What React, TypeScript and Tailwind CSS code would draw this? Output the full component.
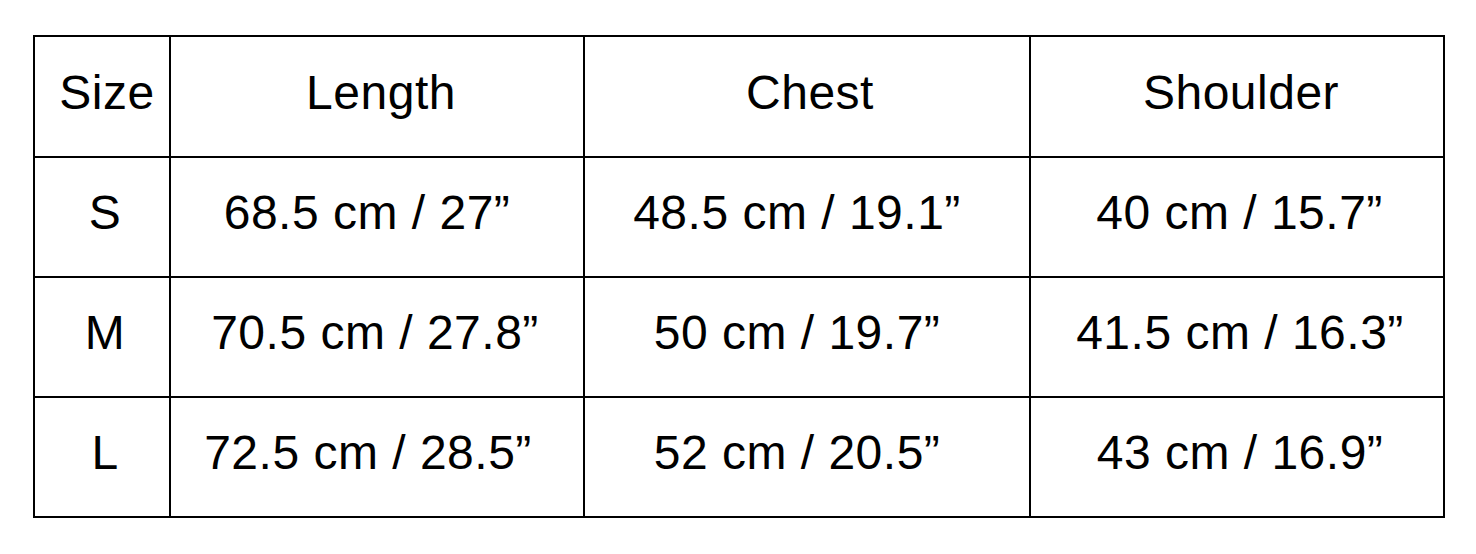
type Cell = { text: string; pad: string };

const header: Cell[] = [
  { text: "Size", pad: "pl-[10px]" },
  { text: "Length", pad: "pl-[8px]" },
  { text: "Chest", pad: "pl-[6px]" },
  { text: "Shoulder", pad: "pl-[8px]" },
];

const rows: Cell[][] = [
  [
    { text: "S", pad: "pl-[6px]" },
    { text: "68.5 cm / 27\u201d", pad: "pr-[20px]" },
    { text: "48.5 cm / 19.1\u201d", pad: "pr-[20px]" },
    { text: "40 cm / 15.7\u201d", pad: "pl-[5px]" },
  ],
  [
    { text: "M", pad: "pl-[6px]" },
    { text: "70.5 cm / 27.8\u201d", pad: "pr-[4px]" },
    { text: "50 cm / 19.7\u201d", pad: "pr-[20px]" },
    { text: "41.5 cm / 16.3\u201d", pad: "pl-[6px]" },
  ],
  [
    { text: "L", pad: "pl-[6px]" },
    { text: "72.5 cm / 28.5\u201d", pad: "pr-[18px]" },
    { text: "52 cm / 20.5\u201d", pad: "pr-[20px]" },
    { text: "43 cm / 16.9\u201d", pad: "pl-[6px]" },
  ],
];

export default function App() {
  return (
    <div className="w-[1476px] h-[554px] bg-white pt-[35px] pl-[33px] font-['Liberation_Sans',Arial,sans-serif] text-black">
      <table className="table-fixed border-collapse border-2 border-black w-[1410px] text-[48px] tracking-[0.5px] leading-none">
        <colgroup>
          <col className="w-[136px]" />
          <col className="w-[414px]" />
          <col className="w-[446px]" />
          <col className="w-[414px]" />
        </colgroup>
        <thead>
          <tr className="h-[121px]">
            {header.map((h) => (
              <th key={h.text} className={`border-2 border-black font-normal text-center p-0 pb-[8px] ${h.pad}`}>
                {h.text}
              </th>
            ))}
          </tr>
        </thead>
        <tbody>
          {rows.map((r) => (
            <tr key={r[0].text} className="h-[120px]">
              {r.map((c, i) => (
                <td key={i} className={`border-2 border-black text-center whitespace-nowrap p-0 pb-[8px] ${c.pad}`}>
                  {c.text}
                </td>
              ))}
            </tr>
          ))}
        </tbody>
      </table>
    </div>
  );
}
